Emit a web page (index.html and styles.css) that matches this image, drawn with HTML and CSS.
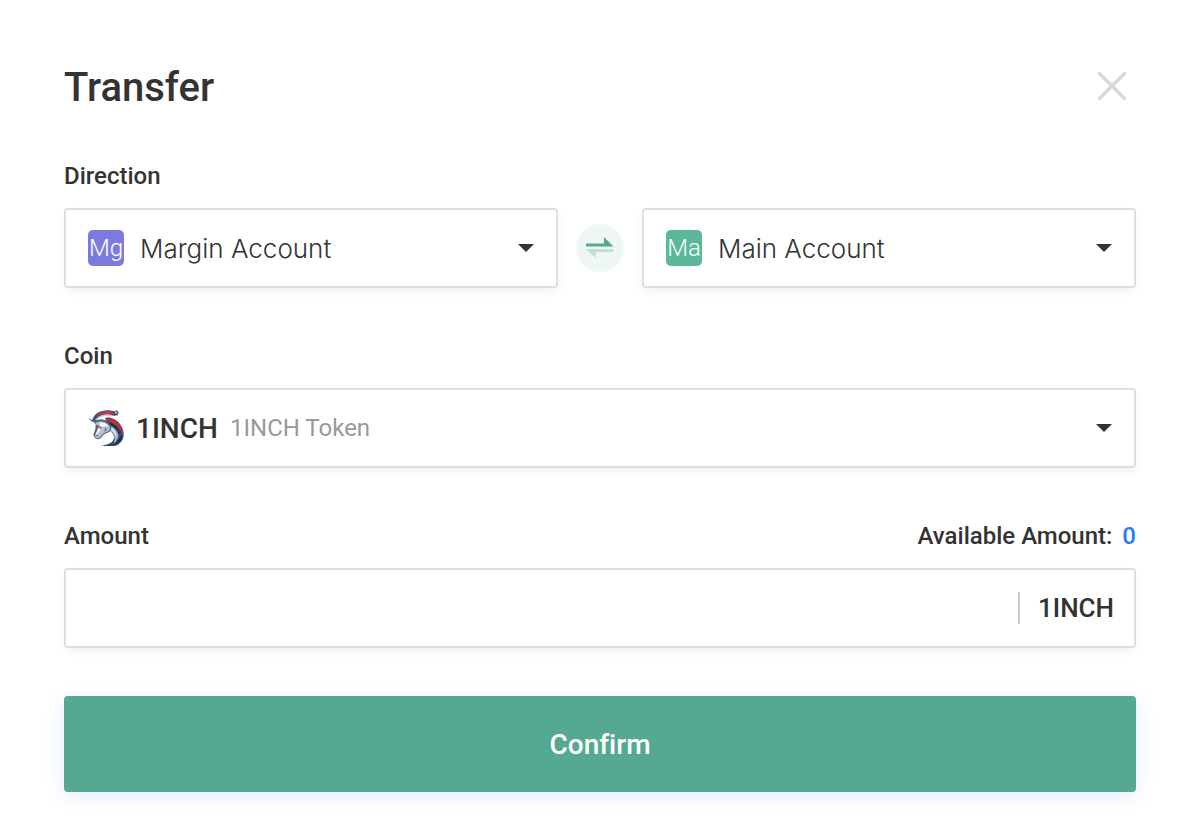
FILE: index.html
```html
<!DOCTYPE html>
<html lang="en">
<head>
    <meta charset="UTF-8">
    <meta name="viewport" content="width=device-width, initial-scale=1.0">
    <title>Transfer</title>
    <link rel="stylesheet" href="styles.css">
</head>
<body>
    <form class="transfer">
        <div class="transfer-header">
            <h1>Transfer</h1>
            <button type="button" class="close-btn" aria-label="Close">
                <svg width="30" height="30" viewBox="0 0 30 30" fill="none" stroke="#d7d9dc" stroke-width="3.400" stroke-linecap="round">
                    <path d="M2.500 2.500l25 25M27.500 2.500l-25 25"/>
                </svg>
            </button>
        </div>

        <div class="form-group">
            <div class="label-row">
                <label for="fromAccount">Direction</label>
            </div>
            <div class="direction">
                <div class="field">
                    <span class="badge badge-margin">Mg</span>
                    <select id="fromAccount" class="account-select">
                        <option>Margin Account</option>
                    </select>
                    <svg class="caret" width="16" height="8" viewBox="0 0 16 8"><path d="M0 0h16L8 8z" fill="#333"/></svg>
                </div>
                <button type="button" class="swap-btn" aria-label="Swap accounts">
                    <svg width="28" height="22" viewBox="0 0 28 22">
                        <path d="M0 6.500h18V0l9.500 9.500H0z" fill="#55a990"/>
                        <path d="M0 12h27.500v3H9.500v6z" fill="#bfe0d5"/>
                    </svg>
                </button>
                <div class="field">
                    <span class="badge badge-main">Ma</span>
                    <select id="toAccount" class="account-select" aria-label="To account">
                        <option>Main Account</option>
                    </select>
                    <svg class="caret" width="16" height="8" viewBox="0 0 16 8"><path d="M0 0h16L8 8z" fill="#333"/></svg>
                </div>
            </div>
        </div>

        <div class="form-group">
            <div class="label-row">
                <label for="coin">Coin</label>
            </div>
            <div class="field coin-field">
                <svg class="coin-icon" width="36" height="36" viewBox="0 0 108 108">
                    <!-- neck and mane -->
                    <path d="M50 22c26-2 48 13 55 38 5 18 0 36-18 46-12 4-34 3-48 0 20-1 34-7 38-19 3-11-2-17-8-22z" fill="#33466b"/>
                    <path d="M54 24c26-1 46 17 51 42l1 16c-5-26-22-42-50-50z" fill="#c62f36"/>
                    <path d="M60 36c19 7 31 21 36 38-9-15-20-24-36-28z" fill="#17223d"/>
                    <path d="M62 44c19 7 30 20 30 38-2 9-8 16-16 20 8-17 1-29-9-39z" fill="#9cabc5"/>
                    <path d="M68 50c13 9 19 20 17 34-3-12-10-20-17-26z" fill="#e4e9f1"/>
                    <path d="M88 70c5 14 1 25-12 33 18-5 26-13 27-26-5 3-7 8-10 12z" fill="#1c2948"/>
                    <!-- crest -->
                    <path d="M13 32C18 10 38 0 62 1l18 3 6-3 6 6-3 9-13 1C54 10 36 17 23 36z" fill="#3b4b6e"/>
                    <path d="M22 22C34 4 57 0 80 8l-4 6C54 8 36 13 22 22z" fill="#d4353a"/>
                    <path d="M20 31c12-16 33-22 54-15-16 3-26 11-41 16z" fill="#c5cfde"/>
                    <path d="M27 28c12-10 26-12 40-8-13 1-20 7-31 10z" fill="#f2f5f9"/>
                    <path d="M80 6l5-2 3 5-4 3z" fill="#c5cfde"/>
                    <!-- head -->
                    <path d="M0 23l12 8 2-6 9 6c19-6 35-1 44 11 7 11 1 24-10 27-9 2-13 7-17 14l-9 5-10-4-5-9 6-17 1-15c-2-5-8-9-14-10z" fill="#4d5f80"/>
                    <path d="M22 38c18-7 34-2 42 9 5 10-1 18-11 20-8 3-12 8-16 15l-8 3-9-5 3-11c7-9 9-18 2-25z" fill="#b4c1d5"/>
                    <path d="M36 37c14 1 22 6 25 15-8-5-16-4-22 0-2 10-7 18-15 25 1-13 9-22 12-40z" fill="#f6f8fb"/>
                    <path d="M28 44l13 7-3 5-9-3z" fill="#39405a"/>
                    <path d="M32 47l7 4-3 4-5-3z" fill="#e3b94a"/>
                    <path d="M52 52c7 4 4 12-4 13 2-4 4-7 4-13z" fill="#60728f"/>
                    <path d="M24 76l7-1-4 4z" fill="#26334f"/>
                </svg>
                <select id="coin" class="coin-select">
                    <option>1INCH</option>
                </select>
                <span class="coin-name">1INCH Token</span>
                <svg class="caret" width="16" height="8" viewBox="0 0 16 8"><path d="M0 0h16L8 8z" fill="#333"/></svg>
            </div>
        </div>

        <div class="form-group">
            <div class="label-row">
                <label for="amount">Amount</label>
                <span class="available">Available Amount: <span class="available-value">0</span></span>
            </div>
            <div class="field amount-field">
                <input type="text" id="amount" class="amount-input" inputmode="decimal" autocomplete="off">
                <span class="unit">1INCH</span>
            </div>
        </div>

        <button type="submit" class="confirm-btn">Confirm</button>
    </form>
</body>
</html>
```
FILE: styles.css
```css
* {
    box-sizing: border-box;
}
body {
    margin: 0;
    background-color: #fff;
    color: #333;
    font-family: Roboto, "Liberation Sans", sans-serif;
    font-size: 24px;
    font-weight: 500;
    font-variant-ligatures: none;
}
button, input, select {
    margin: 0;
    padding: 0;
    border: none;
    background: none;
    color: inherit;
    font: inherit;
}
button, select {
    cursor: pointer;
}
svg {
    display: block;
    flex: none;
}
.transfer {
    padding: 60px 54px 46px 64px;
}
.transfer-header {
    display: flex;
    align-items: center;
    justify-content: space-between;
    margin-bottom: 48px;
}
.transfer-header h1 {
    margin: 0;
    padding-top: 4px;
    font-size: 40px;
    font-weight: 500;
    line-height: 48px;
}
.close-btn {
    display: flex;
    align-items: center;
    justify-content: center;
    width: 48px;
    height: 48px;
}
.form-group {
    margin-bottom: 52px;
}
.form-group:nth-last-of-type(1) {
    margin-bottom: 48px;
}
.label-row {
    display: flex;
    justify-content: space-between;
    margin-bottom: 16px;
    line-height: 32px;
}
.available-value {
    margin-left: 4px;
    color: #2b7af5;
}
.field {
    display: flex;
    align-items: center;
    height: 80px;
    padding: 0 22px;
    border: 2px solid #dedede;
    border-radius: 4px;
    box-shadow: 0 4px 8px rgba(0, 0, 0, 0.05);
}
.direction {
    display: flex;
    align-items: center;
    gap: 18px;
}
.direction .field {
    flex: 1;
    min-width: 0;
    gap: 16px;
}
.badge {
    display: flex;
    flex: none;
    align-items: center;
    justify-content: center;
    width: 36px;
    height: 36px;
    border-radius: 5px;
    color: #fff;
    font-size: 24px;
    font-weight: 300;
}
.badge-margin {
    background-color: #7b7bdd;
}
.badge-main {
    background-color: #58b899;
}
.account-select, .coin-select {
    appearance: none;
    outline: none;
}
.account-select {
    flex: 1;
    min-width: 0;
    padding-top: 2px;
    font-family: Inter, sans-serif;
    font-size: 26px;
    font-weight: 350;
    line-height: 40px;
}
.swap-btn {
    display: flex;
    flex: none;
    align-items: center;
    justify-content: center;
    width: 48px;
    height: 48px;
    border-radius: 50%;
    background-color: #eef7f4;
}
.coin-field {
    gap: 12px;
}
.coin-select {
    font-size: 28px;
}
.coin-name {
    color: #999;
    font-weight: 400;
}
.caret {
    margin-left: auto;
}
.amount-field {
    padding-right: 20px;
}
.amount-input {
    flex: 1;
    min-width: 0;
    height: 72px;
    outline: none;
}
.unit {
    padding-left: 18px;
    border-left: 2px solid #ccc;
    font-size: 26px;
    line-height: 32px;
}
.confirm-btn {
    display: block;
    width: 100%;
    height: 96px;
    border-radius: 4px;
    background-color: #55a990;
    box-shadow: 0 4px 20px rgba(43, 110, 245, 0.14);
    color: #fff;
    font-size: 28px;
}
```
